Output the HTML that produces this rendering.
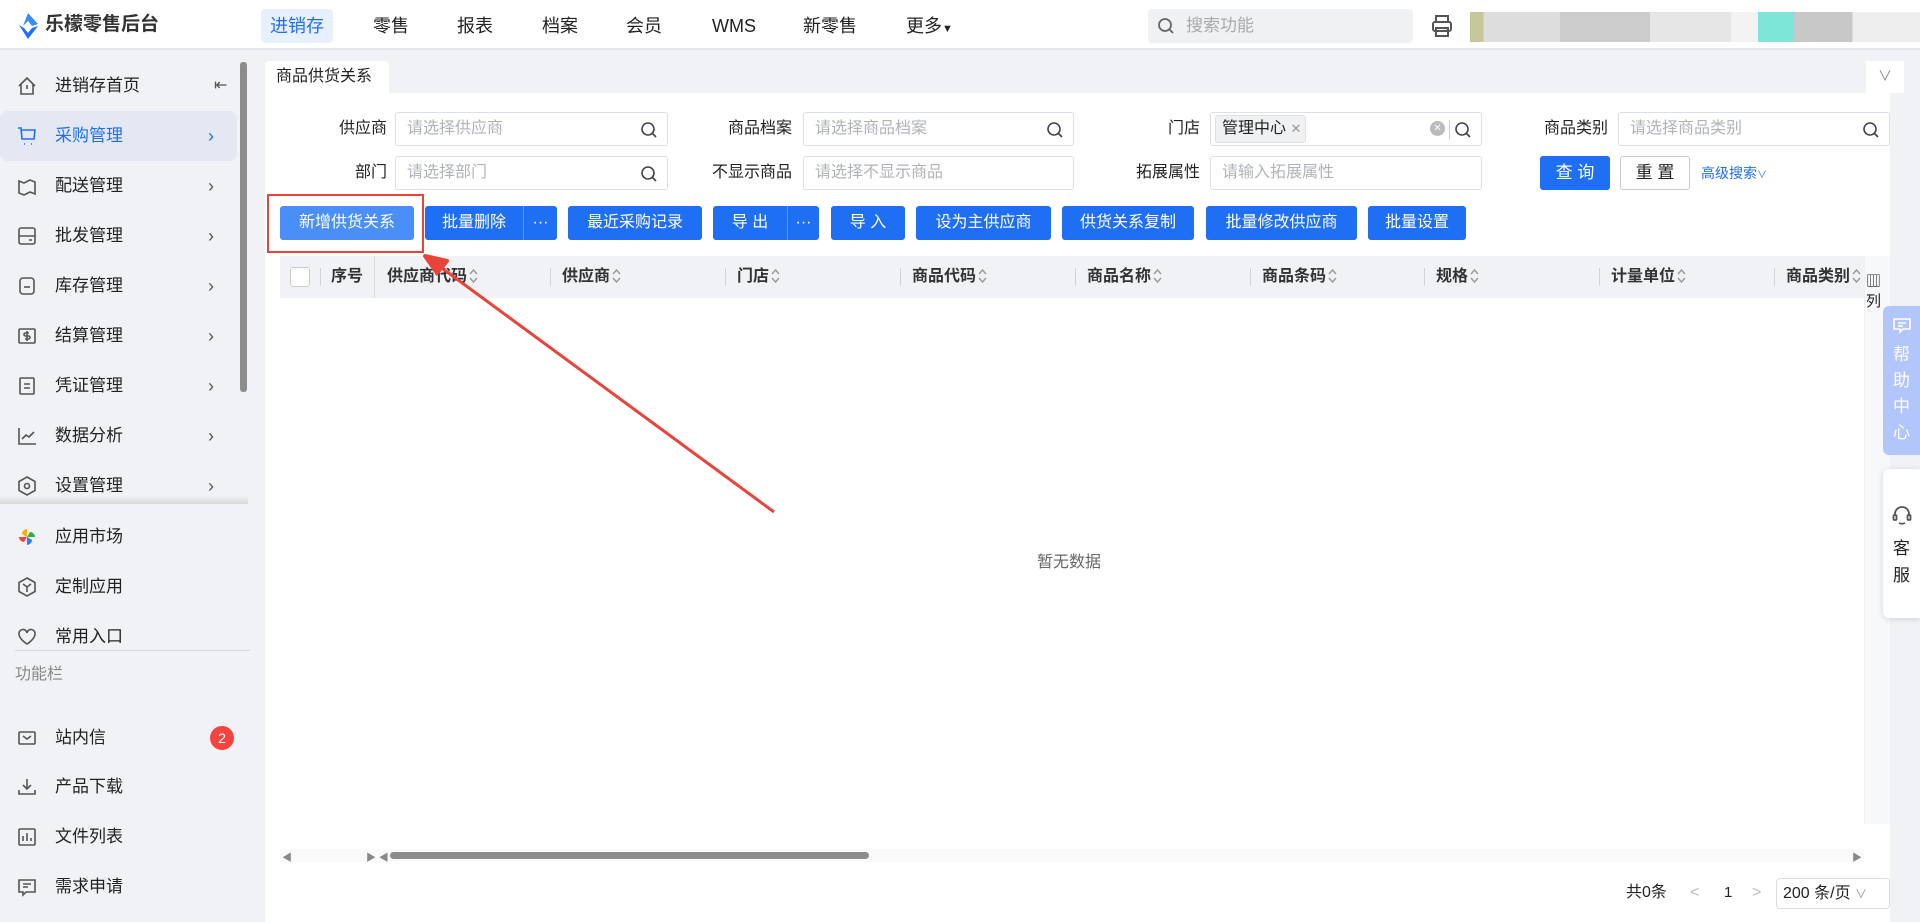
<!DOCTYPE html>
<html><head><meta charset="utf-8">
<style>
*{margin:0;padding:0;box-sizing:border-box}
body{width:1920px;height:922px;overflow:hidden;background:#f0f2f5;font-family:"Liberation Sans","Noto Sans CJK SC",sans-serif;color:#222;position:relative;font-size:16px}
.a{position:absolute}
.hdr{left:0;top:0;width:1920px;height:50px;background:#fff;border-bottom:2px solid #e4e6ea}
.nav{top:9px;height:34px;line-height:34px;font-size:18px;color:#222}
.side{left:0;top:50px;width:265px;height:872px;background:#f0f2f5}
.mi{left:0;width:237px;height:50px;font-size:17px;line-height:50px}
.mi .t{position:absolute;left:55px}
.mi .ar{position:absolute;left:208px;top:0;color:#555;font-size:18px}
.ic{position:absolute;left:17px;top:15px;width:20px;height:20px}
.lbl{font-size:16px;text-align:right;width:100px;line-height:34px}
.inp{height:34px;border:1px solid #dcdfe6;border-radius:3px;background:#fff;color:#b0b3b8;font-size:16px;line-height:32px;padding-left:11px}
.inp svg{position:absolute;right:9px;top:8px}
.btn{top:206px;height:34px;background:#1f6ff5;color:#fff;font-size:16px;line-height:34px;text-align:center;border-radius:3px}
.th{top:256px;height:42px;line-height:42px;font-size:16px;font-weight:bold;color:#333;white-space:nowrap}
.th svg{vertical-align:-3px;margin-left:2px}
.dv{top:268px;width:1px;height:18px;background:#d0d3d8}
</style></head><body>
<svg width="0" height="0" style="position:absolute"><defs><symbol id="s" viewBox="0 0 9 16"><path d="M1 6l3.5-4 3.5 4M1 10l3.5 4 3.5-4" fill="none" stroke="#999" stroke-width="1.4"/></symbol></defs></svg>
<div class="a hdr"></div>
<svg class="a" style="left:18px;top:13px" width="21" height="26" viewBox="0 0 21 26"><path d="M10 0 L20 11 L14 13 L10 8 L5 13 Z" fill="#3b8cf5"/><path d="M1 12 L10 26 L20 13 L14 15 L10 20 L6 15Z" fill="#1f6ff5"/></svg>
<div class="a" style="left:45px;top:12px;font-size:19px;font-weight:bold;color:#333;line-height:26px">乐檬零售后台</div>
<div class="a nav" style="left:261px;width:72px;background:#e8effd;border-radius:4px;color:#1f6ff5;text-align:center">进销存</div>
<div class="a nav" style="left:373px">零售</div>
<div class="a nav" style="left:457px">报表</div>
<div class="a nav" style="left:542px">档案</div>
<div class="a nav" style="left:626px">会员</div>
<div class="a nav" style="left:712px">WMS</div>
<div class="a nav" style="left:803px">新零售</div>
<div class="a nav" style="left:906px">更多<span style="font-size:11px">▼</span></div>
<div class="a" style="left:1148px;top:9px;width:265px;height:34px;background:#f0f1f3;border-radius:4px;color:#aaa;font-size:17px;line-height:34px;padding-left:38px">搜索功能</div>
<svg class="a" style="left:1157px;top:17px" width="18" height="18" viewBox="0 0 18 18" fill="none" stroke="#666" stroke-width="1.8"><circle cx="8" cy="8" r="6"/><path d="M12.5 12.5L16 16"/></svg>
<svg class="a" style="left:1431px;top:14px" width="22" height="24" viewBox="0 0 22 24" fill="none" stroke="#555" stroke-width="2"><rect x="5" y="2" width="12" height="6"/><rect x="2" y="8" width="18" height="9" rx="2"/><rect x="5" y="14" width="12" height="8"/></svg>
<div class="a" style="left:1470px;top:12px;width:450px;height:30px;background:linear-gradient(90deg,#c8c79a 0 3%,#ddd 3% 20%,#ccc 20% 40%,#e6e6e6 40% 58%,#f3f3f3 58% 64%,#7ee6d8 64% 72%,#c8c8c8 72% 85%,#eee 85%)"></div>

<div class="a side"></div>
<div class="a" style="left:240px;top:62px;width:7px;height:330px;background:#8c8c8c;border-radius:3px"></div>
<div class="a" style="left:237px;top:494px;font-size:9px;color:#888">▼</div>
<div class="a" style="left:0;top:496px;width:248px;height:8px;background:linear-gradient(#f0f2f5,#d8d8d8)"></div>

<div class="a mi" style="top:61px"><svg class="ic" viewBox="0 0 20 20" fill="none" stroke="#555" stroke-width="1.6"><path d="M2 10L10 2l8 8M4 8v10h12V8M10 9v4"/></svg><span class="t">进销存首页</span><span class="ar" style="left:214px;font-size:16px">⇤</span></div>
<div class="a mi" style="top:111px;background:#e3e8f3;border-radius:8px;color:#1f6ff5"><svg class="ic" viewBox="0 0 20 20" fill="none" stroke="#1f6ff5" stroke-width="1.6"><path d="M1 2h3l1 11h12l1-9H5M7 18h1M14 18h1"/></svg><span class="t">采购管理</span><span class="ar" style="color:#1f6ff5">›</span></div>
<div class="a mi" style="top:161px"><svg class="ic" viewBox="0 0 20 20" fill="none" stroke="#555" stroke-width="1.6"><path d="M2 5l5 2 6-3 5 2v12l-5-2-6 3-5-2z"/></svg><span class="t">配送管理</span><span class="ar">›</span></div>
<div class="a mi" style="top:211px"><svg class="ic" viewBox="0 0 20 20" fill="none" stroke="#555" stroke-width="1.6"><rect x="2" y="2" width="16" height="16" rx="2"/><path d="M2 10h16M12 14h3"/></svg><span class="t">批发管理</span><span class="ar">›</span></div>
<div class="a mi" style="top:261px"><svg class="ic" viewBox="0 0 20 20" fill="none" stroke="#555" stroke-width="1.6"><rect x="3" y="2" width="14" height="16" rx="3"/><path d="M7 11h6"/></svg><span class="t">库存管理</span><span class="ar">›</span></div>
<div class="a mi" style="top:311px"><svg class="ic" viewBox="0 0 20 20" fill="none" stroke="#555" stroke-width="1.6"><rect x="2" y="3" width="16" height="14" rx="1"/><path d="M12 7H8.5a1.5 1.5 0 000 3h3a1.5 1.5 0 010 3H8M10 5v10"/></svg><span class="t">结算管理</span><span class="ar">›</span></div>
<div class="a mi" style="top:361px"><svg class="ic" viewBox="0 0 20 20" fill="none" stroke="#555" stroke-width="1.6"><rect x="3" y="2" width="14" height="16" rx="1"/><path d="M7 8h6M7 12h6"/></svg><span class="t">凭证管理</span><span class="ar">›</span></div>
<div class="a mi" style="top:411px"><svg class="ic" viewBox="0 0 20 20" fill="none" stroke="#555" stroke-width="1.6"><path d="M2 2v16h17M5 13l4-4 3 2 5-5"/></svg><span class="t">数据分析</span><span class="ar">›</span></div>
<div class="a mi" style="top:461px"><svg class="ic" viewBox="0 0 20 20" fill="none" stroke="#555" stroke-width="1.6"><path d="M10 1l8 4.5v9L10 19l-8-4.5v-9z"/><circle cx="10" cy="10" r="2.5"/></svg><span class="t">设置管理</span><span class="ar">›</span></div>
<div class="a mi" style="top:512px"><svg class="ic" viewBox="0 0 20 20"><path d="M10 10V2a5 5 0 00-5 5z" fill="#f5b400"/><path d="M10 10h8a5 5 0 00-5-5z" fill="#2bb24c"/><path d="M10 10v8a5 5 0 005-5z" fill="#2f7cf6"/><path d="M10 10H2a5 5 0 005 5z" fill="#f04438"/></svg><span class="t">应用市场</span></div>
<div class="a mi" style="top:562px"><svg class="ic" viewBox="0 0 20 20" fill="none" stroke="#555" stroke-width="1.6"><path d="M10 1l8 4.5v9L10 19l-8-4.5v-9z"/><path d="M6 7l4 3 4-3M10 10v5"/></svg><span class="t">定制应用</span></div>
<div class="a mi" style="top:612px"><svg class="ic" viewBox="0 0 20 20" fill="none" stroke="#555" stroke-width="1.6"><path d="M10 17S2 12 2 7a4 4 0 018-1 4 4 0 018 1c0 5-8 10-8 10z"/></svg><span class="t">常用入口</span></div>
<div class="a" style="left:15px;top:650px;width:235px;height:1px;background:#d8dbe0"></div>
<div class="a" style="left:15px;top:664px;font-size:16px;color:#888;line-height:22px">功能栏</div>
<div class="a mi" style="top:713px"><svg class="ic" viewBox="0 0 20 20" fill="none" stroke="#555" stroke-width="1.6"><rect x="2" y="4" width="16" height="12" rx="1"/><path d="M6 8l4 3 4-3"/></svg><span class="t">站内信</span></div>
<div class="a" style="left:210px;top:726px;width:24px;height:24px;border-radius:12px;background:#f5433f;color:#fff;font-size:14px;line-height:24px;text-align:center">2</div>
<div class="a mi" style="top:762px"><svg class="ic" viewBox="0 0 20 20" fill="none" stroke="#555" stroke-width="1.6"><path d="M10 2v10M6 8l4 4 4-4M2 13v4h16v-4"/></svg><span class="t">产品下载</span></div>
<div class="a mi" style="top:812px"><svg class="ic" viewBox="0 0 20 20" fill="none" stroke="#555" stroke-width="1.6"><rect x="2" y="2" width="16" height="16" rx="1"/><path d="M6 14V9M10 14V6M14 14v-3"/></svg><span class="t">文件列表</span></div>
<div class="a mi" style="top:862px"><svg class="ic" viewBox="0 0 20 20" fill="none" stroke="#555" stroke-width="1.6"><path d="M2 3h16v12H9l-3 3v-3H2z"/><path d="M6 7h8M6 10h5"/></svg><span class="t">需求申请</span></div>

<div class="a" style="left:265px;top:61px;width:124px;height:32px;background:#fff;border-radius:4px 4px 0 0;font-size:16px;line-height:32px;padding-left:11px">商品供货关系</div>
<div class="a" style="left:1866px;top:61px;width:38px;height:32px;background:#fff;color:#888;text-align:center;line-height:30px;font-size:14px">∨</div>
<div class="a" style="left:265px;top:93px;width:1625px;height:829px;background:#fff"></div>

<div class="a lbl" style="left:287px;top:112px">供应商</div>
<div class="a inp" style="left:395px;top:112px;width:273px">请选择供应商<svg width="18" height="18" viewBox="0 0 18 18" fill="none" stroke="#444" stroke-width="1.6"><circle cx="8" cy="8" r="6"/><path d="M12.5 12.5L16 16"/></svg></div>
<div class="a lbl" style="left:692px;top:112px">商品档案</div>
<div class="a inp" style="left:803px;top:112px;width:271px">请选择商品档案<svg width="18" height="18" viewBox="0 0 18 18" fill="none" stroke="#444" stroke-width="1.6"><circle cx="8" cy="8" r="6"/><path d="M12.5 12.5L16 16"/></svg></div>
<div class="a lbl" style="left:1100px;top:112px">门店</div>
<div class="a inp" style="left:1210px;top:112px;width:272px;padding-left:4px"><span style="display:inline-block;background:#f0f1f3;border:1px solid #e0e0e0;border-radius:3px;color:#222;line-height:26px;height:28px;padding:0 4px 0 6px;margin-top:2px">管理中心 <span style="color:#999;font-size:13px">✕</span></span>
<span style="position:absolute;right:36px;top:8px;width:15px;height:15px;border-radius:8px;background:#bbb;color:#fff;font-size:10px;line-height:15px;text-align:center">✕</span><span style="position:absolute;right:31px;top:7px;width:1px;height:19px;background:#ccc"></span><svg width="18" height="18" viewBox="0 0 18 18" fill="none" stroke="#444" stroke-width="1.6"><circle cx="8" cy="8" r="6"/><path d="M12.5 12.5L16 16"/></svg></div>
<div class="a lbl" style="left:1508px;top:112px">商品类别</div>
<div class="a inp" style="left:1618px;top:112px;width:272px">请选择商品类别<svg width="18" height="18" viewBox="0 0 18 18" fill="none" stroke="#444" stroke-width="1.6"><circle cx="8" cy="8" r="6"/><path d="M12.5 12.5L16 16"/></svg></div>

<div class="a lbl" style="left:287px;top:156px">部门</div>
<div class="a inp" style="left:395px;top:156px;width:273px">请选择部门<svg width="18" height="18" viewBox="0 0 18 18" fill="none" stroke="#444" stroke-width="1.6"><circle cx="8" cy="8" r="6"/><path d="M12.5 12.5L16 16"/></svg></div>
<div class="a lbl" style="left:692px;top:156px">不显示商品</div>
<div class="a inp" style="left:803px;top:156px;width:271px">请选择不显示商品</div>
<div class="a lbl" style="left:1100px;top:156px">拓展属性</div>
<div class="a inp" style="left:1210px;top:156px;width:272px">请输入拓展属性</div>
<div class="a btn" style="left:1540px;top:156px;width:70px;font-size:17px">查 询</div>
<div class="a" style="left:1620px;top:156px;width:70px;height:34px;border:1px solid #ccc;border-radius:3px;text-align:center;line-height:32px;font-size:17px">重 置</div>
<div class="a" style="left:1701px;top:163px;color:#1f6ff5;font-size:14px;line-height:20px">高级搜索<span style="font-size:10px">∨</span></div>

<div class="a btn" style="left:280px;width:134px;background:#4a8ef7">新增供货关系</div>
<div class="a btn" style="left:425px;width:132px"><span style="position:absolute;left:0;width:98px">批量删除</span><span style="position:absolute;left:98px;top:0;width:1px;height:34px;background:#5a94f7"></span><span style="position:absolute;left:99px;width:33px">···</span></div>
<div class="a btn" style="left:568px;width:134px">最近采购记录</div>
<div class="a btn" style="left:713px;width:106px"><span style="position:absolute;left:0;width:74px">导 出</span><span style="position:absolute;left:74px;top:0;width:1px;height:34px;background:#5a94f7"></span><span style="position:absolute;left:75px;width:31px">···</span></div>
<div class="a btn" style="left:831px;width:74px">导 入</div>
<div class="a btn" style="left:916px;width:135px">设为主供应商</div>
<div class="a btn" style="left:1062px;width:132px">供货关系复制</div>
<div class="a btn" style="left:1206px;width:151px">批量修改供应商</div>
<div class="a btn" style="left:1368px;width:98px">批量设置</div>

<div class="a" style="left:280px;top:256px;width:1584px;height:42px;background:#f0f2f5"></div>
<div class="a" style="left:1864px;top:256px;width:26px;height:568px;background:#f7f8fa;border-left:1px solid #eee"></div>
<div class="a" style="left:1866px;top:272px;font-size:15px;line-height:20px">▥<br>列</div>
<div class="a" style="left:290px;top:267px;width:20px;height:20px;border:1px solid #ccc;border-radius:3px;background:#fff"></div>
<div class="a dv" style="left:320px"></div>
<div class="a th" style="left:331px">序号</div>
<div class="a" style="left:374px;top:256px;width:1px;height:42px;background:#ddd"></div>
<div class="a th" style="left:387px">供应商代码<svg width="9" height="16"><use href="#s"/></svg></div>
<div class="a dv" style="left:550px"></div><div class="a th" style="left:562px">供应商<svg width="9" height="16"><use href="#s"/></svg></div>
<div class="a dv" style="left:725px"></div><div class="a th" style="left:737px">门店<svg width="9" height="16"><use href="#s"/></svg></div>
<div class="a dv" style="left:900px"></div><div class="a th" style="left:912px">商品代码<svg width="9" height="16"><use href="#s"/></svg></div>
<div class="a dv" style="left:1075px"></div><div class="a th" style="left:1087px">商品名称<svg width="9" height="16"><use href="#s"/></svg></div>
<div class="a dv" style="left:1250px"></div><div class="a th" style="left:1262px">商品条码<svg width="9" height="16"><use href="#s"/></svg></div>
<div class="a dv" style="left:1424px"></div><div class="a th" style="left:1436px">规格<svg width="9" height="16"><use href="#s"/></svg></div>
<div class="a dv" style="left:1599px"></div><div class="a th" style="left:1611px">计量单位<svg width="9" height="16"><use href="#s"/></svg></div>
<div class="a dv" style="left:1774px"></div><div class="a th" style="left:1774px;width:90px;overflow:hidden;padding-left:12px">商品类别<svg width="9" height="16"><use href="#s"/></svg></div>

<div class="a" style="left:1037px;top:548px;color:#666;font-size:16px">暂无数据</div>

<div class="a" style="left:280px;top:849px;width:1584px;height:13px;background:#fafafa"></div>
<div class="a" style="left:282px;top:849px;font-size:10px;color:#888">◀</div>
<div class="a" style="left:366px;top:849px;font-size:10px;color:#888">▶ ◀</div>
<div class="a" style="left:390px;top:852px;width:479px;height:7px;background:#8c8c8c;border-radius:4px"></div>
<div class="a" style="left:1852px;top:849px;font-size:10px;color:#888">▶</div>

<div class="a" style="left:1626px;top:882px;font-size:16px;line-height:22px">共0条</div>
<div class="a" style="left:1690px;top:882px;font-size:16px;color:#bbb;line-height:22px">&lt;</div>
<div class="a" style="left:1724px;top:882px;font-size:15px;line-height:22px">1</div>
<div class="a" style="left:1752px;top:882px;font-size:16px;color:#bbb;line-height:22px">&gt;</div>
<div class="a" style="left:1776px;top:878px;width:114px;height:31px;border:1px solid #ddd;border-radius:4px;font-size:16px;line-height:29px;padding-left:6px">200 条/页 <span style="color:#999;font-size:12px">∨</span></div>

<div class="a" style="left:1883px;top:306px;width:37px;height:149px;background:#b3c6fb;border-radius:6px 0 0 6px;color:#fff;font-size:17px;text-align:center;line-height:26px;padding-top:10px">
<svg width="18" height="16" viewBox="0 0 18 16" fill="none" stroke="#fff" stroke-width="1.6"><path d="M1 1h16v10H10l-3 3v-3H1z"/><path d="M5 5h8M5 8h5"/></svg><br>帮<br>助<br>中<br>心</div>
<div class="a" style="left:1883px;top:469px;width:37px;height:149px;background:#fff;border-radius:6px 0 0 6px;box-shadow:0 1px 6px rgba(0,0,0,.15);text-align:center;font-size:17px;line-height:27px;padding-top:36px">
<svg width="20" height="22" viewBox="0 0 20 22" fill="none" stroke="#555" stroke-width="1.8"><path d="M3 11V9a7 7 0 0114 0v2"/><rect x="1.5" y="10" width="3" height="5" rx="1"/><rect x="15.5" y="10" width="3" height="5" rx="1"/><path d="M7 18c2 1 4 1 6 0"/></svg><br>客<br>服</div>

<div class="a" style="left:267px;top:194px;width:157px;height:59px;border:2px solid #e8443a"></div>
<svg class="a" style="left:0;top:0" width="1920" height="922"><line x1="774" y1="512" x2="435" y2="263" stroke="#e8443a" stroke-width="3"/><path d="M425 256 L447 261 L437 273 Z" fill="#e8443a" stroke="#e8443a" stroke-width="4" stroke-linejoin="round"/></svg>
</body></html>
